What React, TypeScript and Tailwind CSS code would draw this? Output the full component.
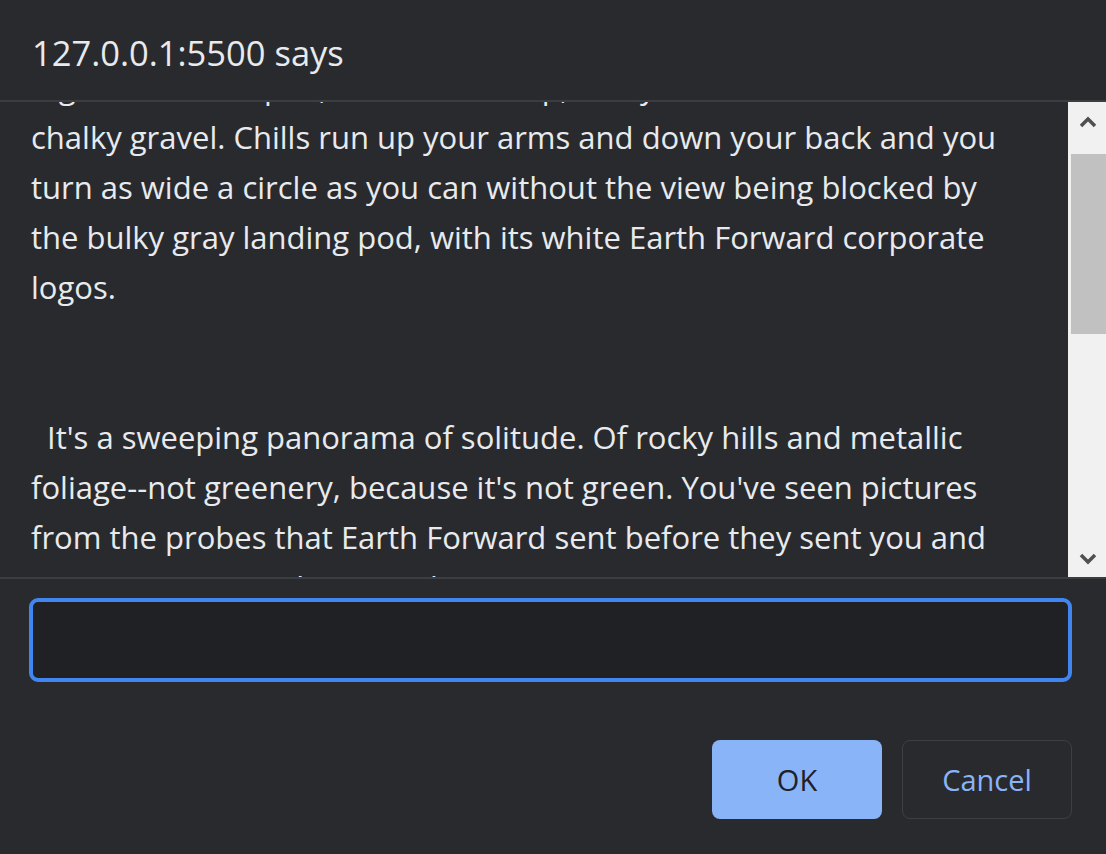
const lines = [
  "Big doors now open, and then a step, and your boots crunch on",
  "chalky gravel. Chills run up your arms and down your back and you",
  "turn as wide a circle as you can without the view being blocked by",
  "the bulky gray landing pod, with its white Earth Forward corporate",
  "logos.",
  "",
  "",
  "  It's a sweeping panorama of solitude. Of rocky hills and metallic",
  "foliage--not greenery, because it's not green. You've seen pictures",
  "from the probes that Earth Forward sent before they sent you and",
  "everyone. From orbit, sure, but none come near to seeing 750 meters",
];

function ScrollArrow({ up }: { up?: boolean }) {
  return (
    <svg width="18" height="12" viewBox="0 0 18 12" className="block">
      <path
        d={up ? "M2 10 L9 3 L16 10" : "M2 2 L9 9 L16 2"}
        fill="none"
        stroke="#505050"
        strokeWidth="3.5"
      />
    </svg>
  );
}

export default function App() {
  return (
    <div
      className="w-[1106px] h-[854px] bg-[#292a2d] text-[#e8eaed] flex flex-col overflow-hidden"
      style={{ fontFamily: '"Open Sans", "Noto Sans", sans-serif' }}
    >
      {/* Title */}
      <div className="h-[102px] shrink-0 flex items-center px-[32px] border-b-2 border-[#3c3d40]">
        <h1 className="text-[34.5px] leading-none font-normal pt-[6px]">127.0.0.1:5500 says</h1>
      </div>

      {/* Message, scrolled part way down */}
      <div className="h-[475px] shrink-0 flex">
        <div className="flex-1 overflow-hidden pl-[31px]">
          <div className="-mt-[40px] text-[31px] leading-[50px] whitespace-pre">
            {lines.map((line, i) => (
              <div key={i} className="h-[50px]">
                {line}
              </div>
            ))}
          </div>
        </div>
        <div className="w-[38px] bg-[#f1f1f1] flex flex-col">
          <div className="h-[52px] flex items-start justify-center pt-[14px] pl-[2px]">
            <ScrollArrow up />
          </div>
          <div className="h-[180px] ml-[3px] bg-[#c1c1c1]" />
          <div className="flex-1" />
          <div className="h-[36px] flex items-center justify-center pl-[2px]">
            <ScrollArrow />
          </div>
        </div>
      </div>

      {/* Input and buttons */}
      <div className="flex-1 border-t-2 border-[#3c3d40] px-[29px] pt-[19px]">
        <input
          className="w-[1043px] h-[84px] rounded-[9px] border-4 border-[#4186f0] bg-[#202124] outline-none px-4 text-[28px] text-[#e8eaed]"
          defaultValue=""
        />
        <div className="flex justify-end gap-[20px] mt-[58px] pr-[5px]">
          <button className="w-[170px] h-[79px] rounded-[8px] bg-[#8ab4f8] text-[#202124] text-[29px] font-medium">
            OK
          </button>
          <button className="w-[170px] h-[79px] rounded-[8px] border border-[#3c4043] text-[#8ab4f8] text-[29px] font-medium">
            Cancel
          </button>
        </div>
      </div>
    </div>
  );
}
